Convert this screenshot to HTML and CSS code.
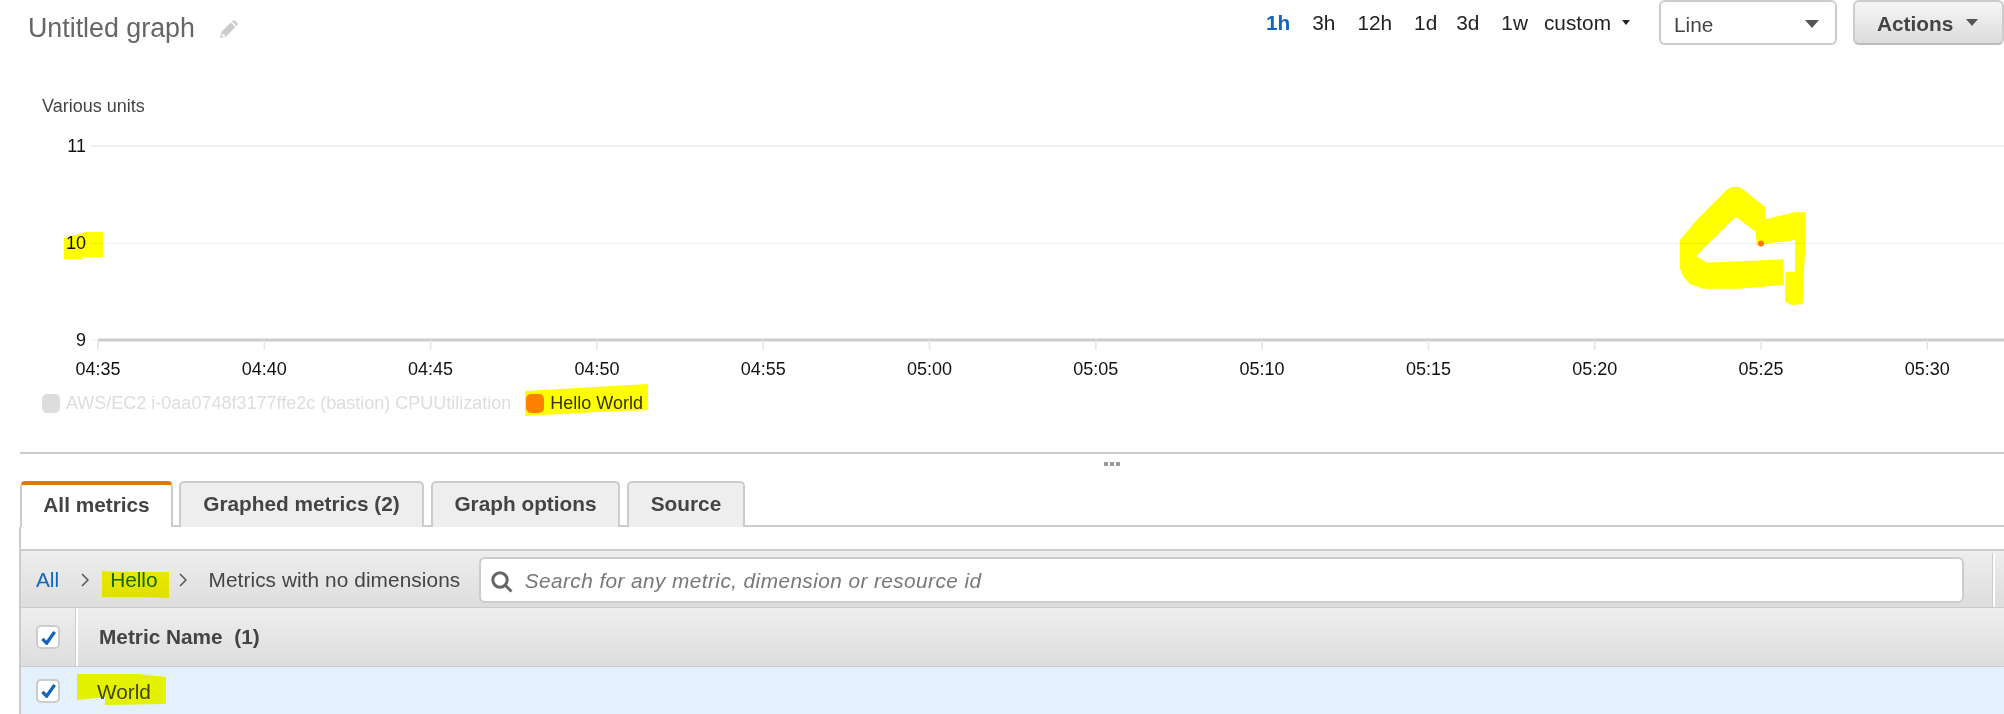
FILE: index.html
```html
<!DOCTYPE html>
<html lang="en">
<head>
<meta charset="utf-8">
<title>Untitled graph</title>
<link rel="stylesheet" href="styles.css">
</head>
<body>
<header class="top">
  <h1 class="title">Untitled graph</h1>
  <svg class="pencil" viewBox="0 0 18 18"><path fill-rule="evenodd" d="M0 18l1.6-6.2L10.9 2.6l4.5 4.5L6.2 16.4zM2.7 13.6l-.6 2.3 .8.8 2.3-.6-.3-1.3-1-.9z"/><path d="M11.9 1.6l.9-.9c.7-.7 1.6-.7 2.3 0l2.2 2.2c.7.7.7 1.6 0 2.3l-.9.9z"/></svg>
  <nav class="ranges">
    <span class="range on">1h</span><span class="range">3h</span><span class="range">12h</span><span class="range">1d</span><span class="range tight">3d</span><span class="range">1w</span>
    <span class="range custom">custom<i class="caret-sm"></i></span>
  </nav>
  <div class="select">Line<i class="caret"></i></div>
  <button class="actions">Actions<i class="caret"></i></button>
</header>

<svg class="chart" viewBox="0 90 2004 290" width="2004" height="290">
  <text class="unit" x="42" y="112">Various units</text>
  <line class="grid thick" x1="91" x2="2004" y1="146" y2="146"/>
  <line class="grid" x1="91" x2="2004" y1="243.5" y2="243.5"/>
  <line class="grid" x1="91" x2="98" y1="340" y2="340"/>
  <line class="axis" x1="98" x2="2004" y1="340" y2="340"/>
  <g class="ylabels">
    <text x="86" y="152">11</text>
    <text x="86" y="249">10</text>
    <text x="86" y="346">9</text>
  </g>
  <g class="ticks">
    <line x1="98" x2="98" y1="340" y2="350"/><line x1="264.3" x2="264.3" y1="340" y2="350"/><line x1="430.6" x2="430.6" y1="340" y2="350"/><line x1="596.9" x2="596.9" y1="340" y2="350"/><line x1="763.2" x2="763.2" y1="340" y2="350"/><line x1="929.5" x2="929.5" y1="340" y2="350"/><line x1="1095.8" x2="1095.8" y1="340" y2="350"/><line x1="1262.1" x2="1262.1" y1="340" y2="350"/><line x1="1428.4" x2="1428.4" y1="340" y2="350"/><line x1="1594.7" x2="1594.7" y1="340" y2="350"/><line x1="1761" x2="1761" y1="340" y2="350"/><line x1="1927.3" x2="1927.3" y1="340" y2="350"/>
  </g>
  <g class="xlabels">
    <text x="98" y="375">04:35</text><text x="264.3" y="375">04:40</text><text x="430.6" y="375">04:45</text><text x="596.9" y="375">04:50</text><text x="763.2" y="375">04:55</text><text x="929.5" y="375">05:00</text><text x="1095.8" y="375">05:05</text><text x="1262.1" y="375">05:10</text><text x="1428.4" y="375">05:15</text><text x="1594.7" y="375">05:20</text><text x="1761" y="375">05:25</text><text x="1927.3" y="375">05:30</text>
  </g>
  <circle class="point" cx="1761" cy="243.5" r="3"/>
</svg>

<div class="legend">
  <span class="legend-item off"><i class="swatch"></i>AWS/EC2 i-0aa0748f3177ffe2c (bastion) CPUUtilization</span>
  <span class="legend-item"><i class="swatch orange"></i>Hello World</span>
</div>

<div class="resizer"><i></i><i></i><i></i></div>

<div class="tabs">
  <div class="tab active">All metrics</div>
  <div class="tab graphed">Graphed metrics (2)</div>
  <div class="tab options">Graph options</div>
  <div class="tab source">Source</div>
</div>

<section class="panel">
  <div class="toolbar">
    <a class="crumb-link">All</a>
    <svg class="chev" viewBox="0 0 8 14"><path d="M1 1l6 6-6 6"/></svg>
    <a class="crumb-link">Hello</a>
    <svg class="chev" viewBox="0 0 8 14"><path d="M1 1l6 6-6 6"/></svg>
    <span class="crumb">Metrics with no dimensions</span>
    <div class="search">
      <svg class="glass" viewBox="0 0 22 22"><circle cx="9" cy="9" r="7.2"/><path d="M14 14l6.5 6.5"/></svg>
      <span class="placeholder">Search for any metric, dimension or resource id</span>
    </div>
    <div class="tool-end"></div>
  </div>
  <div class="head-row">
    <div class="check-cell">
      <span class="check"><svg viewBox="0 0 16 16"><path d="M1.5 9.5L6 14 14.5 2"/></svg></span>
    </div>
    <div class="head-name">Metric Name&nbsp; (1)</div>
  </div>
  <div class="data-row">
    <div class="check-cell">
      <span class="check"><svg viewBox="0 0 16 16"><path d="M1.5 9.5L6 14 14.5 2"/></svg></span>
    </div>
    <div class="data-name">World</div>
  </div>
</section>

<svg class="marker" viewBox="0 0 2004 714" width="2004" height="714">
  <polygon points="64,238 86,232 103,232 103,257 82,257 82,259 64,259"/>
  <polygon points="525,391 648,384 648,410 600,412 525,416"/>
  <polygon points="102,571 130,572 169,572 169,598 140,597 102,597"/>
  <polygon points="77,674 138,674 166,677 166,704 105,705 105,697 77,700"/>
  <polygon points="1783.3,259.3 1707.3,262.7 1696,256 1735.7,216.7 1755.7,231.7 1756.7,245 1795,240 1795,271.7 1785.7,271.7 1785,301.7 1791.7,305 1802.7,304 1804,270 1805.7,241.7 1805.7,212.3 1795,212.3 1765,219.3 1765,206.7 1740,187.3 1733.3,186.7 1727.3,189.3 1696.7,220 1680,240 1680,268.3 1683.3,276.7 1690,284 1703.3,288.7 1738.3,288.7 1784,285"/>
</svg>
</body>
</html>
```

FILE: styles.css
```css
* { box-sizing: border-box; }
html, body { margin: 0; padding: 0; background: #fff; }
body {
  position: relative;
  width: 2004px;
  height: 714px;
  overflow: hidden;
  font-family: "Liberation Sans", Arial, sans-serif;
  font-size: 20.8px;
  color: #444;
}

/* Header */
.top { display: flex; align-items: flex-start; height: 90px; }
.title { margin: 11px 0 0 28px; font-size: 26.8px; font-weight: 400; line-height: 34px; color: #666; }
.pencil { width: 18px; height: 18px; margin: 20px 0 0 25px; fill: #ccc; }
.ranges { display: flex; gap: 22px; margin-left: auto; margin-right: 29px; height: 46px; align-items: center; color: #222; line-height: 1; }
.range.on { color: #1166bb; font-weight: 700; }
.range.tight { margin-left: -3px; }
.range.custom { margin-left: -6px; display: flex; align-items: center; }
.caret-sm { width: 0; height: 0; margin-left: 11px; border: 4px solid transparent; border-top: 5px solid #222; border-bottom: 0; }
.select {
  display: flex; align-items: center; justify-content: space-between;
  width: 178px; height: 45px; padding: 5px 16px 0 13px;
  border: 2px solid #ccc; border-radius: 6px; background: #fff; color: #444;
}
.caret { width: 0; height: 0; border: 7.5px solid transparent; border-top: 8px solid #555; border-bottom: 0; display: block; }
.select .caret { margin-top: -3px; }
.actions {
  display: flex; align-items: center; gap: 13px;
  width: 151px; height: 45px; margin-left: 16px; padding: 2px 0 0 22px;
  border: 2px solid #ccc; border-bottom-color: #bbb; border-radius: 6px;
  background: linear-gradient(#f6f6f6, #dcdcdc);
  font: 700 20.8px "Liberation Sans", Arial, sans-serif; color: #444;
}
.actions .caret { border-width: 7px 6.5px 0; border-top-color: #555; margin-top: -2px; }

/* Chart */
.chart { display: block; }
.chart text { font-size: 18px; fill: #111; }
.chart .unit { fill: #444; }
.grid { stroke: #eee; stroke-width: 1; }
.grid.thick { stroke-width: 2; }
.axis { stroke: #ccc; stroke-width: 3; }
.ticks line { stroke: #e4e4e4; stroke-width: 1.5; }
.ylabels text { text-anchor: end; }
.xlabels text { text-anchor: middle; }
.point { fill: #ff7700; }

/* Legend */
.legend { display: flex; gap: 15px; height: 74px; margin-left: 20px; padding: 13px 0 0 22px; border-bottom: 2px solid #ccc; font-size: 18px; line-height: 20px; color: #333; }
.legend-item { display: flex; align-items: center; gap: 6px; height: 20px; }
.legend-item.off { color: #ddd; }
.swatch { width: 18px; height: 19px; border-radius: 5px; background: #ddd; }
.swatch.orange { background: #ff7f00; }

.resizer { display: flex; justify-content: center; gap: 2px; height: 27px; padding: 8px 0 0 219px; }
.resizer i { width: 4px; height: 4px; background: #999; }

/* Tabs */
.tabs { display: flex; gap: 7px; height: 46px; margin-left: 20px; border-bottom: 2px solid #ccc; }
.tab {
  display: flex; align-items: center; justify-content: center;
  height: 46px; padding: 0 0 3px;
  border: 2px solid #ccc; border-bottom: 0; border-radius: 5px 5px 0 0;
  background: #eee; font-weight: 700;
}
.tab.active { width: 153px; margin-right: -1px; padding-bottom: 3px; background: #fff; border-top: 4px solid #e07b00; }
.tab.graphed { width: 245px; }
.tab.options { width: 189px; }
.tab.source { width: 118px; }

/* Panel */
.panel { margin-left: 19px; padding-top: 22px; border-left: 2px solid #ccc; }
.toolbar {
  display: flex; align-items: center; gap: 21.5px;
  height: 59px; padding: 2px 0 0 15px;
  border-top: 2px solid #ccc; border-bottom: 1px solid #ccc;
  background: linear-gradient(#eee, #ddd);
}
.crumb-link { color: #1166bb; }
.crumb { letter-spacing: .08px; }
.chev { width: 8px; height: 14px; fill: none; stroke: #555; stroke-width: 1.5; }
.search {
  display: flex; align-items: center; gap: 12px; flex: 1;
  height: 46px; margin-left: -3px; padding: 2px 0 0 10px;
  border: 2px solid #ccc; border-radius: 6px; background: #fff;
}
.glass { width: 22px; height: 22px; margin-top: 2px; fill: none; stroke: #666; stroke-width: 3; }
.placeholder { font-style: italic; color: #777; letter-spacing: .42px; }
.tool-end { align-self: stretch; width: 12px; margin-left: 7px; border-left: 1px solid #ccc; box-shadow: inset 2px 0 0 #fff; }
.head-row {
  display: flex; align-items: center; height: 59px;
  border-bottom: 1px solid #ccc;
  background: linear-gradient(#eee, #ddd);
}
.check-cell { display: flex; align-items: center; width: 55px; height: 100%; padding-left: 15px; }
.head-row .check-cell { border-right: 1px solid #ccc; box-shadow: 2px 0 0 #fff; }
.check { display: flex; align-items: center; justify-content: center; width: 24px; height: 24px; border: 2px solid #ccc; border-radius: 5px; background: #fff; }
.check svg { width: 15px; height: 15px; fill: none; stroke: #1166bb; stroke-width: 3.6; }
.head-name { margin-left: 23px; font-weight: 700; }
.data-row { display: flex; align-items: center; height: 47px; background: #e4f1fd; }
.data-name { margin-left: 21px; padding-top: 2px; }

/* Hand-drawn highlighter on top of the page */
.marker { position: absolute; left: 0; top: 0; fill: #ffff00; mix-blend-mode: multiply; pointer-events: none; }
```
